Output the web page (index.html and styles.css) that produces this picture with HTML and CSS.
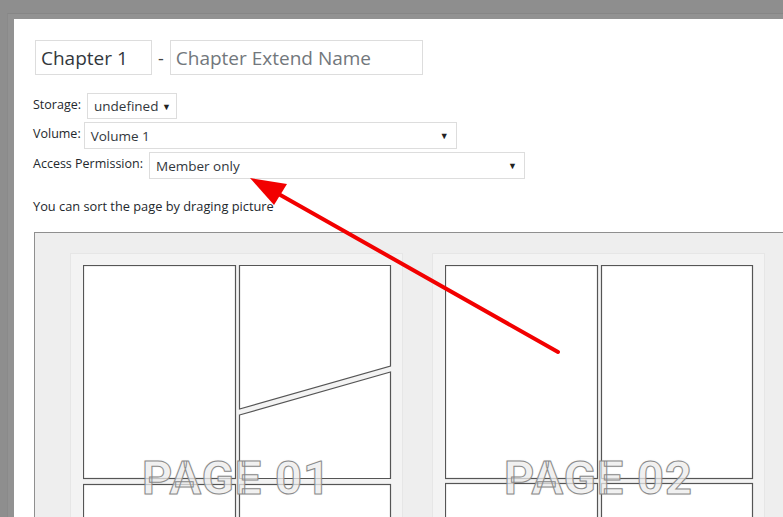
FILE: index.html
```html
<!DOCTYPE html>
<html lang="en">
<head>
    <meta charset="UTF-8">
    <meta name="viewport" content="width=device-width, initial-scale=1.0">
    <title>Edit Chapter</title>
    <link rel="stylesheet" href="styles.css">
</head>
<body>
    <div class="backdrop">
        <div class="modal">
            <div class="title-row">
                <input class="chapter-no" type="text" value="Chapter 1">
                <span class="dash">-</span>
                <input class="chapter-name" type="text" placeholder="Chapter Extend Name">
            </div>

            <div class="field storage">
                <label>Storage:</label>
                <div class="select"><span>undefined</span><span class="caret">▼</span></div>
            </div>
            <div class="field volume">
                <label>Volume:</label>
                <div class="select"><span>Volume 1</span><span class="caret">▼</span></div>
            </div>
            <div class="field access">
                <label>Access Permission:</label>
                <div class="select"><span>Member only</span><span class="caret">▼</span></div>
            </div>

            <p class="hint">You can sort the page by draging picture</p>

            <div class="sorter">
                <div class="page-card">
                    <svg class="panels" width="310" height="300" viewBox="0 0 310 300">
                        <rect x="0.5" y="0.5" width="152" height="213" />
                        <polygon points="156.5,0.5 307.5,0.5 307.5,101 156.5,144" />
                        <polygon points="156.5,150 307.5,107 307.5,213.5 156.5,213.5" />
                        <rect x="0.5" y="219.5" width="152" height="100" />
                        <rect x="156.5" y="219.5" width="151" height="100" />
                    </svg>
                    <div class="page-label">PAGE 01</div>
                </div>
                <div class="page-card">
                    <svg class="panels" width="310" height="300" viewBox="0 0 310 300">
                        <rect x="0.5" y="0.5" width="152" height="213" />
                        <rect x="156.5" y="0.5" width="151" height="213" />
                        <rect x="0.5" y="218.5" width="152" height="100" />
                        <rect x="156.5" y="218.5" width="151" height="100" />
                    </svg>
                    <div class="page-label">PAGE 02</div>
                </div>
            </div>
        </div>
    </div>

    <svg class="annotation" width="783" height="517" viewBox="0 0 783 517">
        <line x1="558" y1="352" x2="268" y2="188" stroke="#f20000" stroke-width="4" stroke-linecap="round" />
        <polygon points="250,178 287,184 274,205" fill="#f20000" />
    </svg>
</body>
</html>
```

FILE: styles.css
```css
* {
    box-sizing: border-box;
}

html {
    overflow: hidden;
    background: #8e8e8e;
}

body {
    margin: 0;
    width: 783px;
    height: 517px;
    overflow: hidden;
    background: #8e8e8e;
    padding: 13px 0 0 7px;
    font-family: 'Open Sans', 'Noto Sans', sans-serif;
    color: #23282d;
    position: relative;
}

.backdrop {
    height: 100%;
    background: #929292;
    border-top: 1px solid #868686;
    border-left: 1px solid #8a8a8a;
    padding: 5px 0 0 6px;
    overflow: hidden;
}

.modal {
    height: 100%;
    margin-right: -30px;
    background: #fff;
    padding: 21px 0 0 19px;
    overflow: hidden;
}

/* chapter title */
.title-row {
    display: flex;
    align-items: center;
    margin-left: 2px;
    margin-bottom: 18px;
}

.title-row input {
    height: 35px;
    border: 1px solid #ddd;
    font-family: inherit;
    font-size: 19px;
    color: #32373c;
    padding: 0 5px;
    outline: none;
}

.title-row input::placeholder {
    color: #72777c;
}

.chapter-no {
    width: 117px;
}

.chapter-name {
    width: 253px;
}

.dash {
    font-size: 18px;
    color: #444;
    margin: 0 6px 0 6px;
}

/* select rows */
.field {
    display: flex;
    align-items: center;
    margin-bottom: 3px;
}

.field label {
    font-size: 12.5px;
    margin-right: 6px;
    position: relative;
    top: -2px;
}

.volume label {
    margin-right: 3px;
}

.select {
    display: flex;
    align-items: center;
    justify-content: space-between;
    height: 27px;
    border: 1px solid #ddd;
    padding: 0 7px 0 6px;
    font-size: 13.5px;
    color: #32373c;
    background: #fff;
}

.caret {
    font-size: 9px;
    color: #222;
}

.storage .select {
    width: 90px;
    height: 26px;
    padding-right: 5px;
}

.volume .select {
    width: 373px;
}

.access .select {
    width: 376px;
}

.access {
    margin-bottom: 0;
}

.hint {
    font-size: 12.8px;
    margin: 18px 0 17px 0;
}

/* page sorter */
.sorter {
    display: flex;
    gap: 29px;
    background: #eee;
    border: 1px solid #8f8f8f;
    border-right: none;
    border-bottom: none;
    margin-left: 1px;
    padding: 20px 0 0 35px;
    height: 320px;
}

.page-card {
    position: relative;
    flex: 0 0 333px;
    background: #f3f3f3;
    border: 1px solid #e6e6e6;
    padding: 11px 0 0 12px;
}

.panels {
    display: block;
}

.panels rect,
.panels polygon {
    fill: #fff;
    stroke: #555;
    stroke-width: 1.2;
}

.page-label {
    position: absolute;
    left: 0;
    right: 0;
    top: 196px;
    text-align: center;
    font-family: Roboto, 'DejaVu Sans', sans-serif;
    font-weight: 700;
    font-size: 47px;
    letter-spacing: 1px;
    color: rgba(255, 255, 255, 0.7);
    -webkit-text-stroke: 1px #8a8a8a;
    text-shadow: 0 0 2px rgba(0, 0, 0, 0.18);
}

.annotation {
    position: absolute;
    left: 0;
    top: 0;
    pointer-events: none;
}
```
